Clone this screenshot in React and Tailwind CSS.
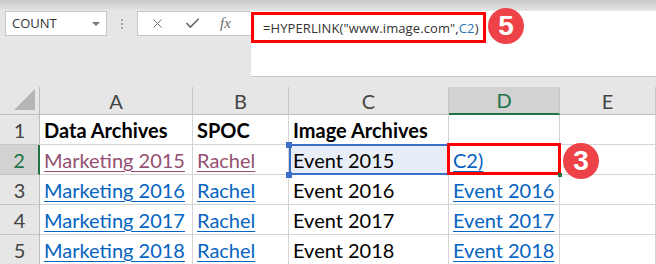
import { X, Check } from 'lucide-react';

const cols = ['A', 'B', 'C', 'D', 'E'];

const rows = [
  { n: 1, cells: [
    { t: 'Data Archives', bold: true },
    { t: 'SPOC', bold: true },
    { t: 'Image Archives', bold: true },
    { t: '' },
    { t: '' },
  ] },
  { n: 2, active: true, cells: [
    { t: 'Marketing 2015', link: 'visited' },
    { t: 'Rachel', link: 'visited' },
    { t: 'Event 2015', ref: true },
    { t: 'C2)', link: 'blue' },
    { t: '' },
  ] },
  { n: 3, cells: [
    { t: 'Marketing 2016', link: 'blue' },
    { t: 'Rachel', link: 'blue' },
    { t: 'Event 2016' },
    { t: 'Event 2016', link: 'blue' },
    { t: '' },
  ] },
  { n: 4, cells: [
    { t: 'Marketing 2017', link: 'blue' },
    { t: 'Rachel', link: 'blue' },
    { t: 'Event 2017' },
    { t: 'Event 2017', link: 'blue' },
    { t: '' },
  ] },
  { n: 5, cells: [
    { t: 'Marketing 2018', link: 'blue' },
    { t: 'Rachel', link: 'blue' },
    { t: 'Event 2018' },
    { t: 'Event 2018', link: 'blue' },
    { t: '' },
  ] },
];

const Badge = ({ n, className }) => (
  <div
    className={`absolute w-[36px] h-[36px] rounded-full bg-[#ee4249] text-white flex items-center justify-center text-[28px] font-bold leading-none font-['Liberation_Sans',Arial,sans-serif] ${className}`}
  >
    {n}
  </div>
);

const Cell = ({ c }) => {
  let color = 'text-black';
  if (c.link === 'visited') color = 'text-[#954f72] underline';
  if (c.link === 'blue') color = 'text-[#0563c1] underline';
  return (
    <div
      className={`h-[30px] border-r border-b border-[#d4d4d4] flex items-end pl-[4px] pb-[2px] whitespace-nowrap overflow-visible text-[20px] leading-[24px] underline-offset-[3px] decoration-1 ${color} ${c.bold ? 'font-bold' : ''} ${c.ref ? 'bg-[#e8eef8]' : 'bg-white'}`}
    >
      {c.t}
    </div>
  );
};

export default function App() {
  return (
    <div className="relative w-[656px] h-[264px] overflow-hidden bg-[#e6e6e6] font-['Lato','Noto_Sans',sans-serif]">
      {/* top strip */}
      <div className="h-[10px] bg-gradient-to-b from-[#c9c9c9] to-[#e3e3e3]" />

      {/* formula bar */}
      <div className="flex h-[66px] mt-[1px]">
        <div className="ml-[5px] w-[102px] h-[25px] bg-white border border-[#c6c6c6] flex items-center justify-between pl-[6px] pr-[6px] text-[13px] text-[#333] font-['Open_Sans',sans-serif]">
          <span>COUNT</span>
          <span className="w-0 h-0 border-l-[4px] border-r-[4px] border-t-[4px] border-l-transparent border-r-transparent border-t-[#777]" />
        </div>
        <div className="w-[30px] h-[25px] flex flex-col items-center justify-center gap-[2px]">
          <span className="w-[2px] h-[2px] bg-[#a6a6a6]" />
          <span className="w-[2px] h-[2px] bg-[#a6a6a6]" />
          <span className="w-[2px] h-[2px] bg-[#a6a6a6]" />
        </div>
        <div className="w-[114px] h-[25px] bg-white border border-[#c6c6c6] border-r-0 flex items-center text-[#6b6b6b]">
          <X className="ml-[12px]" size={15} strokeWidth={1.6} />
          <Check className="ml-[19px]" size={17} strokeWidth={2.4} />
          <span className="ml-[19px] italic text-[15px] font-['Liberation_Serif',serif]">fx</span>
        </div>
        <div className="flex-1 bg-white border-b border-[#c6c6c6] relative">
          <div className="absolute left-0 top-[1px] w-[235px] h-[31px] border-[3px] border-[#ff0000]" />
          <div className="pl-[12px] pt-[8px] text-[13px] tracking-[0.1px] text-[#333] font-['Open_Sans',sans-serif] whitespace-nowrap">
            =HYPERLINK("www.image.com",<span className="text-[#2e75b6]">C2</span>)
          </div>
        </div>
      </div>

      {/* grid */}
      <div className="mt-[10px] grid grid-cols-[40px_153px_96px_160px_111px_96px] relative">
        {/* header row */}
        <div className="h-[28px] border-r border-b border-[#bdbdbd] relative">
          <svg className="absolute right-[4px] bottom-[4px]" width="21" height="21" viewBox="0 0 21 21">
            <polygon points="21,0 21,21 0,21" fill="#b5b5b5" />
          </svg>
        </div>
        {cols.map((l) => (
          <div
            key={l}
            className={`h-[28px] flex items-center justify-center text-[20px] border-r border-[#c6c6c6] ${l === 'D' ? 'bg-[#d2d2d2] text-[#217346] border-b-2 border-b-[#217346]' : 'text-[#444] border-b border-b-[#bdbdbd]'}`}
          >
            {l}
          </div>
        ))}

        {rows.map((r) => (
          <div key={r.n} className="contents">
            <div
              className={`h-[30px] flex items-center justify-center text-[20px] border-b border-[#c6c6c6] ${r.active ? 'bg-[#d2d2d2] text-[#217346] border-r-2 border-r-[#217346]' : 'text-[#444] border-r border-r-[#bdbdbd]'}`}
            >
              {r.n}
            </div>
            {r.cells.map((c, i) => (
              <Cell key={i} c={c} />
            ))}
          </div>
        ))}

        {/* C2 reference highlight */}
        <div className="absolute left-[289px] top-[57px] w-[160px] h-[31px] border-2 border-[#3b6fc8] border-r-0 pointer-events-none" />
        <span className="absolute left-[286px] top-[55px] w-[6px] h-[6px] bg-[#3b6fc8]" />
        <span className="absolute left-[286px] top-[85px] w-[6px] h-[6px] bg-[#3b6fc8]" />
        {/* D2 red annotation */}
        <div className="absolute left-[447px] top-[56px] w-[114px] h-[32px] border-[3px] border-[#ff0000]" />
        <span className="absolute left-[558px] top-[86px] w-[4px] h-[4px] bg-[#217346]" />
      </div>

      <Badge n="5" className="left-[488px] top-[8px]" />
      <Badge n="3" className="left-[563px] top-[143px]" />
    </div>
  );
}
